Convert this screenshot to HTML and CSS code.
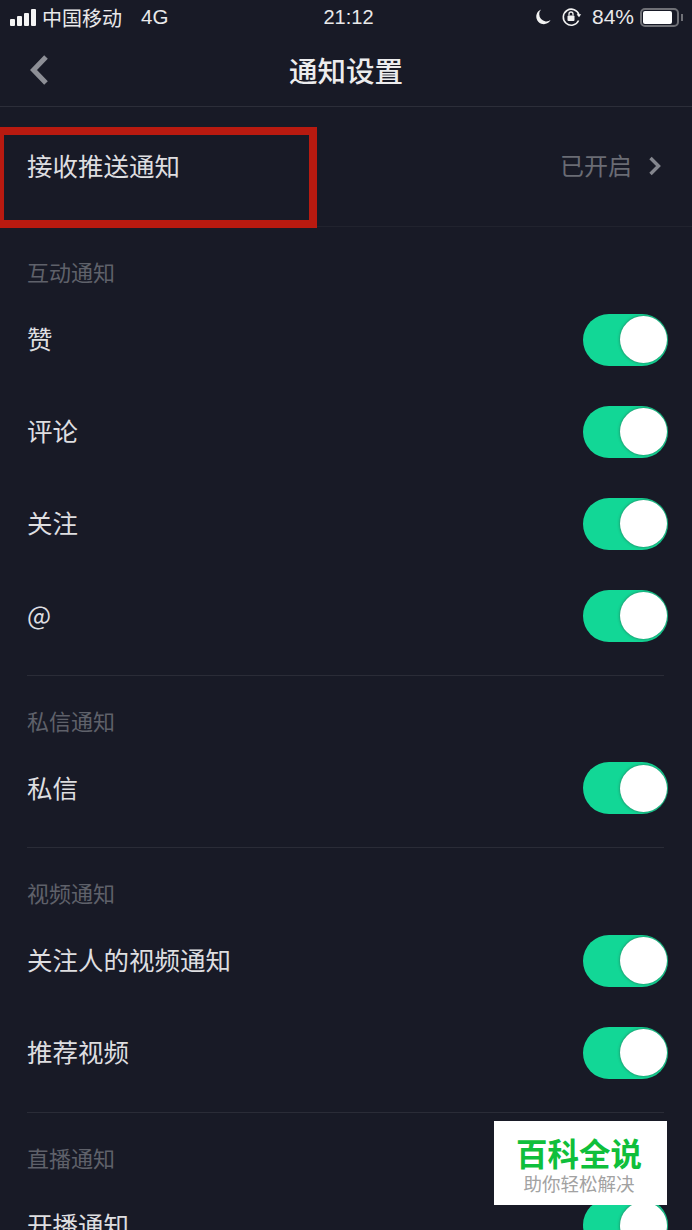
FILE: index.html

```html
<!DOCTYPE html>
<html lang="zh-CN">
<head>
    <meta charset="UTF-8">
    <meta name="viewport" content="width=device-width, initial-scale=1.0">
    <title>通知设置</title>
    <link rel="stylesheet" href="styles.css">
</head>
<body>
    <div class="screen">
        <!-- Status bar -->
        <div class="status-bar">
            <div class="status-left">
                <span class="signal"><i></i><i></i><i></i><i></i></span>
                <span class="carrier">中国移动</span>
                <span class="network">4G</span>
            </div>
            <div class="status-time">21:12</div>
            <div class="status-right">
                <svg class="icon-moon" width="18" height="18" viewBox="0 0 18 18"><path d="M7 1.5a7.6 7.6 0 1 0 9.6 10.6A7.2 7.2 0 0 1 7 1.5z" fill="#f2f2f2"/></svg>
                <svg class="icon-lock" width="21" height="20" viewBox="0 0 21 20" fill="none"><path d="M17.6 13.5A8 8 0 1 1 18 8" stroke="#f2f2f2" stroke-width="1.6"/><path d="M15.6 7.2h4.6L18 10.2z" fill="#f2f2f2"/><rect x="6.5" y="8.5" width="7" height="5.5" rx="1" fill="#f2f2f2"/><path d="M8 8.5V7a2 2 0 0 1 4 0v1.5" stroke="#f2f2f2" stroke-width="1.3"/></svg>
                <span class="battery-text">84%</span>
                <span class="battery"><span class="battery-fill"></span></span>
                <span class="battery-tip"></span>
            </div>
        </div>

        <!-- Header -->
        <header class="nav-bar">
            <svg class="nav-back" width="20" height="32" viewBox="0 0 20 32" fill="none"><path d="M17 3 L4.5 16 L17 29" stroke="#8d8f96" stroke-width="5"/></svg>
            <h1>通知设置</h1>
        </header>

        <div class="row row-push">
            <span class="row-label">接收推送通知</span>
            <span class="row-value">已开启</span>
            <svg class="row-arrow" width="14" height="20" viewBox="0 0 14 20" fill="none"><path d="M2.5 2 L10.5 10 L2.5 18" stroke="#84868e" stroke-width="3.4"/></svg>
        </div>

        <section class="group">
            <h2>互动通知</h2>
            <div class="row"><span class="row-label">赞</span><span class="toggle"><span class="knob"></span></span></div>
            <div class="row"><span class="row-label">评论</span><span class="toggle"><span class="knob"></span></span></div>
            <div class="row"><span class="row-label">关注</span><span class="toggle"><span class="knob"></span></span></div>
            <div class="row"><span class="row-label">@</span><span class="toggle"><span class="knob"></span></span></div>
        </section>

        <section class="group">
            <h2>私信通知</h2>
            <div class="row"><span class="row-label">私信</span><span class="toggle"><span class="knob"></span></span></div>
        </section>

        <section class="group">
            <h2>视频通知</h2>
            <div class="row"><span class="row-label">关注人的视频通知</span><span class="toggle"><span class="knob"></span></span></div>
            <div class="row"><span class="row-label">推荐视频</span><span class="toggle"><span class="knob"></span></span></div>
        </section>

        <section class="group group-last">
            <h2>直播通知</h2>
            <div class="row"><span class="row-label">开播通知</span><span class="toggle"><span class="knob"></span></span></div>
        </section>

        <!-- Overlays on the screenshot -->
        <div class="highlight"></div>
        <div class="watermark">
            <div class="watermark-title">百科全说</div>
            <div class="watermark-sub">助你轻松解决</div>
        </div>
    </div>
</body>
</html>
```

FILE: styles.css

```css
body, h1, h2 {
    margin: 0;
    padding: 0;
    box-sizing: border-box;
}

body {
    background: #181a26;
    color: #e6e6e8;
    font-family: "Noto Sans CJK SC", "Liberation Sans", sans-serif;
}

.screen {
    position: relative;
    width: 692px;
    height: 1230px;
    overflow: hidden;
    background: #181a26;
}

/* Status bar */
.status-bar {
    height: 36px;
    display: flex;
    align-items: center;
    justify-content: space-between;
    padding: 0 10px 2px;
    box-sizing: border-box;
    color: #e9e9ea;
    font-size: 19px;
}

.status-left,
.status-right {
    width: 270px;
    display: flex;
    align-items: center;
}

.status-right {
    justify-content: flex-end;
    margin-right: -1px;
}

.signal {
    display: flex;
    align-items: flex-end;
    gap: 2px;
    height: 17px;
    margin-right: 6px;
}

.signal i {
    width: 5px;
    background: #f4f4f4;
    border-radius: 1px;
}

.signal i:nth-child(1) { height: 7px; }
.signal i:nth-child(2) { height: 10px; }
.signal i:nth-child(3) { height: 13px; }
.signal i:nth-child(4) { height: 17px; }

.carrier {
    font-size: 20px;
}

.network {
    margin-left: 19px;
    font-size: 20.5px;
    font-family: "Liberation Sans", sans-serif;
}

.status-time {
    font-family: "Liberation Sans", sans-serif;
    font-size: 20px;
    margin-left: 4px;
}

.icon-moon {
    margin-right: 9px;
}

.icon-lock {
    margin-right: 10px;
}

.battery-text {
    font-family: "Liberation Sans", sans-serif;
    font-size: 21px;
    margin-right: 6px;
}

.battery {
    width: 39px;
    height: 19px;
    border: 2px solid #6f7076;
    border-radius: 5px;
    padding: 1px;
    box-sizing: border-box;
}

.battery-fill {
    display: block;
    width: 29px;
    height: 13px;
    background: #fff;
    border-radius: 2px;
}

.battery-tip {
    width: 2px;
    height: 7px;
    margin-left: 2px;
    background: #6f7076;
}

/* Header */
.nav-bar {
    position: relative;
    height: 70px;
    display: flex;
    align-items: center;
    justify-content: center;
    border-bottom: 1px solid #2c2e39;
    box-sizing: content-box;
}

.nav-bar h1 {
    font-size: 28.5px;
    font-weight: 500;
    color: #ececed;
    margin-top: -4px;
}

.nav-back {
    position: absolute;
    left: 29px;
    top: 18px;
}

/* Rows */
.row {
    height: 92px;
    display: flex;
    align-items: center;
    padding: 0 24px 0 27px;
    font-size: 25.5px;
    color: #dedee0;
}

.row-label {
    flex: 1;
    margin-top: -4px;
}

.row-push {
    height: 120px;
    padding: 0 30px 4px 27px;
    box-sizing: border-box;
    border-bottom: 1px solid #21232e;
}

.row-push .row-label {
    margin-top: 0;
}

.row-value {
    font-size: 24px;
    color: #6a6c74;
    margin-right: 16px;
}

.row-arrow {
    margin-top: 3px;
}

/* Sections */
.group {
    margin: 0 28px 0 27px;
    padding-bottom: 13px;
    border-bottom: 1px solid #2a2c37;
}

.group h2 {
    height: 66.5px;
    padding-top: 29px;
    box-sizing: border-box;
    font-size: 22px;
    font-weight: 400;
    color: #5f616a;
    line-height: 30px;
}

.group .row {
    padding: 0;
    margin-right: -4px;
}

.group-last {
    border-bottom: none;
}

/* Toggle */
.toggle {
    position: relative;
    display: block;
    width: 85px;
    height: 52px;
    border-radius: 26px;
    background: #12d796;
}

.knob {
    position: absolute;
    top: 2.5px;
    right: 1px;
    width: 47px;
    height: 47px;
    border-radius: 50%;
    background: #fff;
    box-shadow: 0 0 3px rgba(40, 90, 70, 0.8);
}

/* Red marker drawn on the screenshot */
.highlight {
    position: absolute;
    left: -4px;
    top: 127px;
    width: 321px;
    height: 101px;
    border: 8px solid #b81a10;
    box-sizing: border-box;
}

.watermark {
    position: absolute;
    left: 494px;
    top: 1121px;
    width: 173px;
    height: 84px;
    padding-right: 3px;
    box-sizing: border-box;
    background: #fff;
    text-align: center;
}

.watermark-title {
    margin-top: 13px;
    font-size: 31.5px;
    line-height: 36px;
    font-weight: 700;
    color: #0fbf3b;
}

.watermark-sub {
    font-size: 18.5px;
    line-height: 26px;
    color: #a2a2a2;
}
```
